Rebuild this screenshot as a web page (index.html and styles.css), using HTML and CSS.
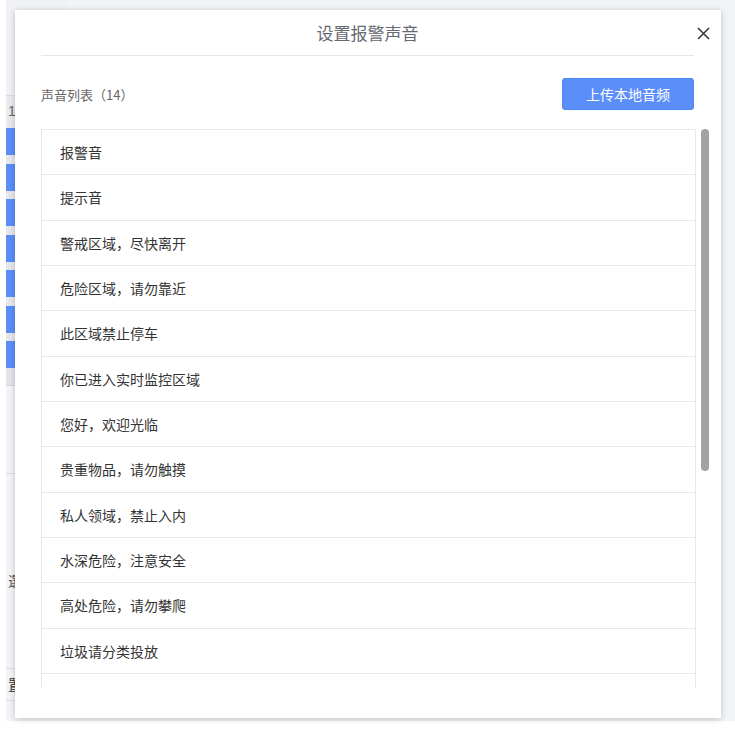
FILE: index.html
```html
<!DOCTYPE html>
<html lang="zh-CN">
<head>
<meta charset="utf-8">
<title>设置报警声音</title>
<link rel="stylesheet" href="styles.css">
</head>
<body>
<div class="page">
  <div class="side">
    <div class="side-top"></div>
    <div class="side-num">1</div>
    <div class="side-bars">
      <div class="bar"></div><div class="bar"></div><div class="bar"></div>
      <div class="bar"></div><div class="bar"></div><div class="bar"></div>
      <div class="bar"></div>
    </div>
    <div class="side-gap"></div>
    <div class="side-cell"></div>
    <div class="side-cell tall"><span>選</span></div>
    <div class="side-cell short"><span>置</span></div>
  </div>
</div>

<div class="dialog">
  <div class="dialog-header">设置报警声音</div>
  <button class="close" aria-label="关闭">
    <svg width="13" height="13" viewBox="0 0 13 13"><path d="M1 1L12 12M12 1L1 12" stroke="#333" stroke-width="1.5" fill="none"/></svg>
  </button>
  <div class="toolbar">
    <span class="label">声音列表（14）</span>
    <button class="upload">上传本地音频</button>
  </div>
  <div class="list-wrap">
    <ul class="list">
      <li>报警音</li>
      <li>提示音</li>
      <li>警戒区域，尽快离开</li>
      <li>危险区域，请勿靠近</li>
      <li>此区域禁止停车</li>
      <li>你已进入实时监控区域</li>
      <li>您好，欢迎光临</li>
      <li>贵重物品，请勿触摸</li>
      <li>私人领域，禁止入内</li>
      <li>水深危险，注意安全</li>
      <li>高处危险，请勿攀爬</li>
      <li>垃圾请分类投放</li>
      <li class="more"></li>
    </ul>
    <div class="scrollbar"><div class="thumb"></div></div>
  </div>
</div>
</body>
</html>
```

FILE: styles.css
```css
* { box-sizing: border-box; }
html, body { margin: 0; padding: 0; }
body {
  background: #fff;
  width: 735px;
  height: 732px;
  overflow: hidden;
  position: relative;
  font-family: "Noto Sans CJK SC", "Noto Sans", sans-serif;
}
.page {
  margin-left: 6px;
  width: 729px;
  height: 721px;
  background: #f2f3f7;
}
.side {
  width: 60px;
  display: flex;
  flex-direction: column;
}
.side-top {
  height: 96px;
  background: #f0f1f4;
  border-bottom: 1px solid #d6dbe6;
}
.side-num {
  height: 31px;
  font-size: 14px;
  color: #666;
  line-height: 31px;
  background: #e9eaed;
  padding-left: 2px;
  font-family: "Liberation Sans", sans-serif;
}
.side-bars {
  display: flex;
  flex-direction: column;
  gap: 8.5px;
  background: #e6e7ea;
  padding-top: 1px;
}
.bar {
  height: 27px;
  background: #5b8ef8;
}
.side-gap {
  height: 18px;
  background: #e3e5ea;
  border-bottom: 1px solid #d3d7df;
}
.side-cell {
  height: 88px;
  background: #f3f4f8;
  border-bottom: 1px solid #d7dae0;
}
.side-cell.tall {
  height: 195px;
  font-size: 14px;
  color: #555;
  padding-top: 96px;
  padding-left: 2px;
}
.side-cell.short {
  height: 32px;
  font-size: 14px;
  color: #333;
  line-height: 30px;
  padding-left: 2px;
}

.dialog {
  position: absolute;
  left: 15px;
  top: 10px;
  width: 706px;
  height: 708px;
  background: #fff;
  box-shadow: 0 1px 6px rgba(0, 0, 0, 0.22);
  padding: 0 27px 30px 26px;
  display: flex;
  flex-direction: column;
}
.dialog-header {
  height: 46px;
  line-height: 45px;
  text-align: center;
  font-size: 17px;
  color: #666a73;
  border-bottom: 1px solid #e6e6e6;
  flex: none;
}
.close {
  position: absolute;
  left: 682px;
  top: 17px;
  width: 13px;
  height: 13px;
  padding: 0;
  border: 0;
  background: none;
  display: flex;
}
.toolbar {
  display: flex;
  align-items: center;
  justify-content: space-between;
  padding-top: 22px;
  height: 73px;
  padding-bottom: 19px;
  flex: none;
}
.label {
  font-size: 13px;
  color: #666;
}
.upload {
  width: 132px;
  height: 32px;
  background: #5b8ef9;
  border: 1px solid #4f84f5;
  border-radius: 3px;
  color: #fff;
  font-size: 14px;
  font-family: inherit;
  padding: 0;
}
.list-wrap {
  display: flex;
  gap: 5px;
  height: 559px;
  margin-right: -15px;
  flex: none;
}
.list {
  list-style: none;
  margin: 0;
  padding: 0;
  width: 655px;
  height: 559px;
  overflow: hidden;
  border: 1px solid #e8e8e8;
  border-bottom: 0;
}
.list li {
  height: 45.33px;
  border-bottom: 1px solid #e8e8e8;
  padding-left: 18px;
  font-size: 14px;
  line-height: 44px;
  color: #333;
}
.scrollbar {
  width: 8px;
  height: 559px;
}
.thumb {
  height: 342px;
  background: #a2a2a2;
  border-radius: 4px;
}
```
